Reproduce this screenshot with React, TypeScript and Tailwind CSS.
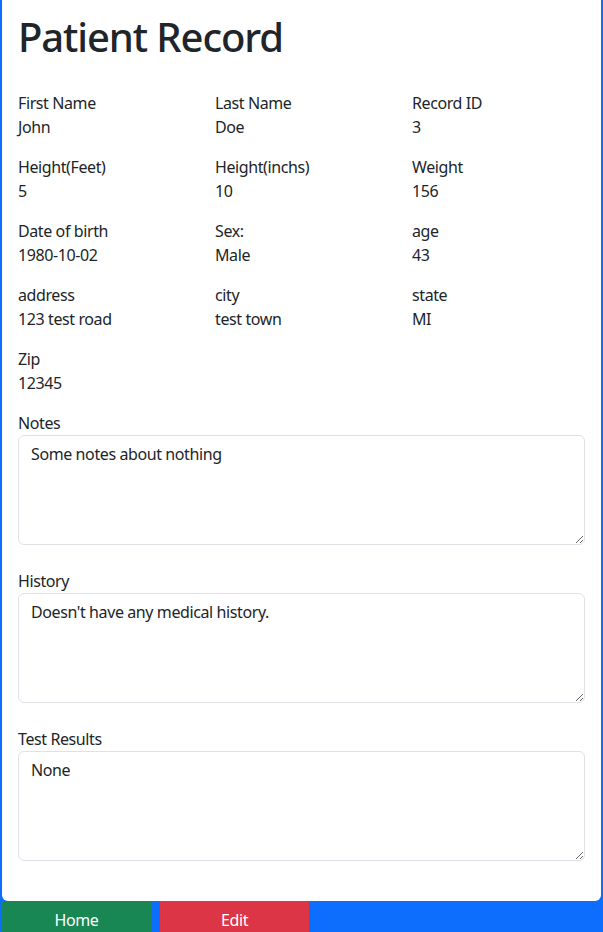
const fields = [
  { label: 'First Name', value: 'John' },
  { label: 'Last Name', value: 'Doe' },
  { label: 'Record ID', value: '3' },
  { label: 'Height(Feet)', value: '5' },
  { label: 'Height(inchs)', value: '10' },
  { label: 'Weight', value: '156' },
  { label: 'Date of birth', value: '1980-10-02' },
  { label: 'Sex:', value: 'Male' },
  { label: 'age', value: '43' },
  { label: 'address', value: '123 test road' },
  { label: 'city', value: 'test town' },
  { label: 'state', value: 'MI' },
  { label: 'Zip', value: '12345' },
];

const notes = [
  { label: 'Notes', value: 'Some notes about nothing' },
  { label: 'History', value: "Doesn't have any medical history." },
  { label: 'Test Results', value: 'None' },
];

export default function App() {
  return (
    <div
      className="min-h-[932px] bg-[#0d6efd] px-[2px] text-[16px] leading-6 tracking-[-0.4px] text-[#212529]"
      style={{ fontFamily: '"Noto Sans", "Open Sans", sans-serif' }}
    >
      {/* record card */}
      <div className="rounded-b-[6px] bg-white px-4 pt-[13px] pb-4">
        <h1 className="text-[40px] leading-[48px] font-medium tracking-[-1.1px]">Patient Record</h1>

        <div className="mt-[30px] grid grid-cols-3 gap-x-6 gap-y-4">
          {fields.map((f) => (
            <div key={f.label}>
              <div>{f.label}</div>
              <div>{f.value}</div>
            </div>
          ))}
        </div>

        <div className="mt-4 flex flex-col gap-6">
          {notes.map((n) => (
            <div key={n.label}>
              <div>{n.label}</div>
              <textarea
                readOnly
                value={n.value}
                className="block h-[110px] w-full rounded-[6px] border border-[#dee2e6] bg-white px-3 py-[6px] text-[16px] leading-6 tracking-[-0.4px] text-[#212529] outline-none"
                style={{ fontFamily: '"Noto Sans", "Open Sans", sans-serif' }}
              />
            </div>
          ))}
        </div>
        <div className="h-6" />
      </div>

      {/* actions */}
      <div className="flex">
        <button className="h-[38px] w-[149px] bg-[#198754] text-white">Home</button>
        <button className="ml-[9px] h-[38px] w-[149px] bg-[#dc3545] text-white">Edit</button>
      </div>
    </div>
  );
}
